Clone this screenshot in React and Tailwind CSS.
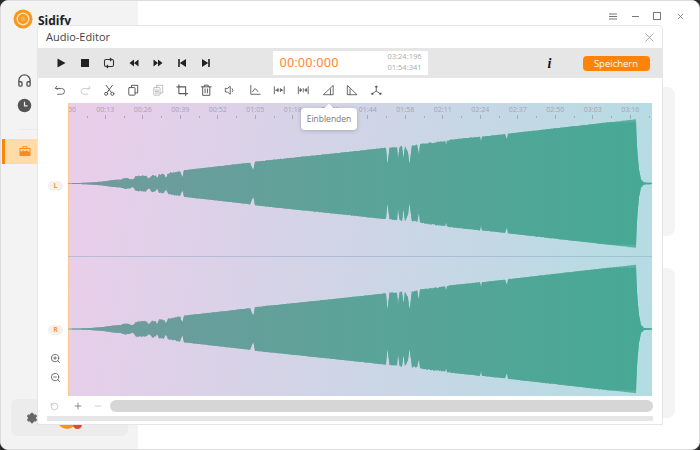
import React from "react";
import { ZoomIn, ZoomOut, RotateCcw, Plus, Minus, X, Headphones, Settings } from "lucide-react";

const TABLE = [[68,.3],[78,.5],[90,1],[103,2],[113,3.5],[120,4],[125,6],[130,5],[133,4],[136,8],[146,8.5],[149,5],[152,9],[156,8],[157,5],[159,10],[164,10],[166,6],[168,11],[180,13],[182.5,7],[184,13.5],[250,21],[252.5,15],[253.5,14],[255,22],[360,33],[386,36],[387.5,20],[389.5,36.5],[397,37],[398,25],[399.5,37],[402,38],[403.5,26],[405,38],[408,32],[409.5,20],[412,39],[414,38],[417,39.5],[419,30],[420,40],[445,43],[446,39],[447,43.5],[480,47],[481,42],[482,47],[505,49.5],[507,44],[508,50],[636,64.5],[636.6,45],[637.5,30],[639,14],[641,4],[644,1],[652,.6]];

function env(x) {
  for (let i = 1; i < TABLE.length; i++) {
    if (x <= TABLE[i][0]) {
      const [a, b] = TABLE[i - 1];
      const [c, d] = TABLE[i];
      return b + ((x - a) / (c - a)) * (d - b);
    }
  }
  return 0.6;
}

function wavePath(cy, seed, clamp) {
  const top = [];
  const bottom = [];
  for (let x = 68; x <= 652; x += 0.5) {
    const e = Math.min(env(x), clamp);
    const amp = x > 120 && x < 183 ? 1.6 : x > 385 && x < 450 ? 1.4 : 0.5;
    const n = Math.sin(x * 12.9898 + seed) * 43758.5453;
    const j = (n - Math.floor(n)) * amp * Math.min(1, e / 10);
    const n2 = Math.sin(x * 78.233 + seed) * 12543.1;
    const j2 = (n2 - Math.floor(n2)) * amp * Math.min(1, e / 10);
    top.push(`${(x - 68).toFixed(1)},${(cy - 103 - (e - j)).toFixed(2)}`);
    bottom.unshift(`${(x - 68).toFixed(1)},${(cy - 103 + (e - j2)).toFixed(2)}`);
  }
  return "M" + top.concat(bottom).join("L") + "Z";
}

const LABELS = ["00:13","00:26","00:39","00:52","01:05","01:18","01:31","01:44","01:58","02:11","02:24","02:37","02:50","03:03","03:16"];

function Ic({ children, color = "#5a5a5a", w = 1 }) {
  return (
    <svg width="12.5" height="12.5" viewBox="0 0 14 14" fill="none" stroke={color} strokeWidth={w} strokeLinecap="round" strokeLinejoin="round">
      {children}
    </svg>
  );
}

const TOOLS = [
  <Ic><path d="M3 2.5 1.5 4.8 4 6M2 5h6.5a3 3 0 0 1 0 6.5H4" /></Ic>,
  <Ic color="#c9c9c9"><path d="M11 2.5l1.5 2.3L10 6M12 5H5.5a3 3 0 0 0 0 6.5H10" /></Ic>,
  <Ic w={1.1}><circle cx="3.5" cy="11" r="1.7" /><circle cx="10.5" cy="11" r="1.7" /><path d="M4.5 9.6 10.5 1.5M9.5 9.6 3.5 1.5" /></Ic>,
  <Ic w={1.1}><rect x="2" y="4" width="7" height="8.5" rx=".6" /><path d="M5 4V1.5h7v8.5h-3" /></Ic>,
  <Ic color="#bdbdbd" w={1.1}><rect x="2" y="4" width="7" height="8.5" rx=".6" /><path d="M5 4V1.5h7v8.5h-3M3.8 6.8h3.4M3.8 8.5h3.4M3.8 10.2h3.4" /></Ic>,
  <Ic w={1.2}><path d="M3.2 1v9.8H13M1 3.2h9.8V13" /></Ic>,
  <Ic w={1.1}><path d="M1.5 3.2h11M4.8 3V1.3h4.4V3M3 3.2v9.5h8V3.2M5.7 5.5v4.5M8.3 5.5v4.5" /></Ic>,
  <Ic><path d="M1.5 5v4h2.3L7 11.5v-9L3.8 5zM9.3 5.2a2.5 2.5 0 0 1 0 3.6" /></Ic>,
  <Ic><path d="M2 1.5v10h10.5" /><path d="M4 8.5l2.7-3.5 1.3 1.5 1 .5 1 1.5" /></Ic>,
  <Ic><path d="M1.5 3v8M12.5 3v8" /><path d="M3 7h2M5.8 5.5v3l-1.6-1.5zM11 7H9M8.2 5.5v3l1.6-1.5z" fill="#5a5a5a" /></Ic>,
  <Ic><path d="M1.5 3v8M12.5 3v8" /><path d="M3 7h.5M3.5 5.5v3l1.6-1.5zM11 7h-.5M10.5 5.5v3l-1.6-1.5z" fill="#5a5a5a" /><path d="M7 5v4" /></Ic>,
  <Ic><path d="M2 12h10.5V2zM9.5 12V5.5" /></Ic>,
  <Ic><path d="M12 12H1.5V2zM4.5 12V5.5" /></Ic>,
  <Ic w={1}><path d="M7 3v5L3 10.5M7 8l4 2.5" /><circle cx="7" cy="3" r=".8" fill="#5a5a5a" /><circle cx="2.5" cy="11" r=".8" fill="#5a5a5a" /><circle cx="11.5" cy="11" r=".8" fill="#5a5a5a" /></Ic>,
];

const tri = (d) => (
  <svg width="12" height="12" viewBox="0 0 12 12" fill="#222"><path d={d} /></svg>
);

const TRANSPORT = [
  tri("M2.5 1.5 10.5 6l-8 4.5z"),
  tri("M2 2h8v8H2z"),
  <svg width="12" height="12" viewBox="0 0 12 12" fill="none" stroke="#333" strokeWidth="1.1"><rect x="1.5" y="2.5" width="9" height="7" rx="1.5" /><path d="M7 1l1.5 1.5L7 4M5 8l-1.5 1.5L5 11" /></svg>,
  tri("M6 2.5v7L1.5 6zM10.5 2.5v7L6 6z"),
  tri("M6 2.5v7L10.5 6zM1.5 2.5v7L6 6z"),
  tri("M2.2 2h1.6v8H2.2zM10 2v8L3.8 6z"),
  tri("M8.2 2h1.6v8H8.2zM2 2v8L8.2 6z"),
];

function Cell({ children }) {
  return <div className="w-[24.3px] h-full flex items-center justify-center shrink-0">{children}</div>;
}

export default function App() {
  const font = { fontFamily: '"Open Sans", "Liberation Sans", sans-serif' };
  return (
    <div style={font} className="w-[700px] h-[450px] bg-[#2a2a2a] overflow-hidden relative">
      <div className="w-[699.5px] h-[449.5px] flex bg-white rounded-lg border border-[#dcdcdc] overflow-hidden">
        <aside className="w-[137px] h-full bg-[#f3f3f3] flex flex-col shrink-0">
          <div className="h-[44px] flex items-start pl-[12px] pt-[8px] gap-[5px]">
            <svg width="20" height="20" viewBox="0 0 20 20">
              <circle cx="10" cy="10" r="9.5" fill="#f9971f" />
              <circle cx="10" cy="10" r="5.8" fill="none" stroke="#fde3b8" strokeWidth="1.4" />
              <circle cx="10" cy="10" r="2.4" fill="#fbb04e" />
            </svg>
            <span className="text-[12px] font-bold text-[#222] leading-[18px] mt-[3px]">Sidify</span>
          </div>
          <div className="flex flex-col items-start pl-[16px] mt-[28px] gap-[9px]">
            <Headphones size={15} color="#555" strokeWidth={2.2} />
            <svg width="15" height="15" viewBox="0 0 15 15" className="translate-y-px">
              <circle cx="7.5" cy="7.5" r="6.8" fill="#555" />
              <path d="M7.5 3.8v4h3" stroke="#eee" strokeWidth="1.2" fill="none" />
            </svg>
          </div>
          <div className="mt-[17px] ml-[17px] w-[22px] h-px bg-[#ebebeb]" />
          <div className="mt-[9px] h-[25px] bg-[#ffdca8] border-l-[3px] border-[#ff8307] ml-px flex items-center pl-[14px]">
            <svg width="12" height="12" viewBox="0 0 12 12" fill="#ff8a1c" className="-translate-y-px"><path d="M3.5 3V1.2h5V3H11.5v8H.5V3zM4.5 3h3v-.9h-3zM1.5 6.5h1.5l1-1.5 2 1.5 2-1.5 1 1.5h1.5V4h-9z" fillRule="evenodd" /></svg>
          </div>
          <div className="mt-auto mb-[13px] ml-[10px] w-[117px] h-[37px] rounded-md bg-[#ececec] flex items-center pl-[15px] gap-[19px] relative">
            <Settings size={12} color="#666" fill="#666" className="translate-y-px" />
            <div className="w-[20px] h-[20px] rounded-full bg-[#f8931f] relative top-[2px]" />
            <div className="w-[9px] h-[9px] rounded-full bg-[#e0492f] -ml-[23px] relative top-[7px]" />
          </div>
        </aside>
        <main className="flex-1 flex flex-col">
          <div className="h-[30px] flex items-center justify-end shrink-0">
            <div className="flex items-center gap-[14.5px] mr-[14px] text-[#777]">
              <svg width="8" height="7" viewBox="0 0 8 7" stroke="#777" strokeWidth="1"><path d="M0 1h8M0 3.5h8M0 6h8" /></svg>
              <span className="w-[7px] h-px bg-[#777]" />
              <span className="w-[8px] h-[8px] border border-[#777]" />
              <X size={9} color="#777" />
            </div>
          </div>
          <div className="mt-[56px] mr-[24px] ml-[24px] h-[149px] rounded-lg bg-[#f4f4f4] shrink-0" />
          <div className="mt-[32px] mr-[24px] ml-[24px] h-[150px] rounded-lg bg-[#f4f4f4] shrink-0" />
        </main>
      </div>

      <div className="absolute left-[38px] top-[26px] w-[624px] h-[398px] bg-white flex flex-col shadow-[0_0_0_1px_#e6e6e6] rounded-t-sm">
        <div className="h-[22px] flex items-center justify-between pl-[8px] pr-[5px] shrink-0">
          <span className="text-[11px] text-[#444]">Audio-Editor</span>
          <X size={15} color="#777" strokeWidth={1} />
        </div>
        <div className="h-[30px] bg-[#e6e6e6] flex items-center pl-[10.5px] shrink-0">
          <div className="flex h-full w-[224px]">
            {TRANSPORT.map((t, i) => <Cell key={i}>{t}</Cell>)}
          </div>
          <div className="w-[155px] h-[24px] bg-white flex items-center justify-between pl-[7px] pr-[6px]">
            <span style={{ fontFamily: 'Roboto, sans-serif' }} className="text-[13px] tracking-[0.2px] text-[#ff8a3d]">00:00:000</span>
            <div className="flex flex-col items-end text-[7.5px] leading-[11px] text-[#aaa] -translate-y-px">
              <span>03:24:196</span>
              <span>01:54:341</span>
            </div>
          </div>
          <span style={{ fontFamily: '"Liberation Serif", serif' }} className="ml-[120px] text-[14px] font-bold italic text-[#111] w-[8px]">i</span>
          <button className="ml-[27px] w-[67px] h-[15px] rounded-sm bg-[#ff8307] text-white text-[9.5px] leading-[15px]">Speichern</button>
        </div>
        <div className="h-[25px] flex items-center pl-[10.5px] shrink-0">
          {TOOLS.map((t, i) => <Cell key={i}>{t}</Cell>)}
        </div>
        <div className="h-[293px] flex shrink-0">
          <div className="w-[30px] flex flex-col items-center shrink-0">
            <div className="mt-[78px] ml-[5px] w-[15px] h-[10px] rounded-full bg-[#f6f0ea] text-[7px] leading-[10px] font-bold text-center text-[#f59a45]">L</div>
            <div className="mt-[134px] ml-[5px] w-[15px] h-[10px] rounded-full bg-[#f6f0ea] text-[7px] leading-[10px] font-bold text-center text-[#f59a45]">R</div>
            <div className="mt-[17.5px] ml-[5px] flex flex-col gap-[8px]">
              <ZoomIn size={11} color="#666" />
              <ZoomOut size={11} color="#666" />
            </div>
          </div>
          <div className="w-[584px] h-full relative border-l border-[#fbc98a] bg-[linear-gradient(100deg,#ebcdea,#b2dde2)]">
            <svg className="absolute left-[-1px] top-0" width="584" height="293" viewBox="0 0 584 293">
              <defs>
                <linearGradient id="w" x1="0" x2="1" y1="0" y2="0">
                  <stop offset="0" stopColor="#739a9e" />
                  <stop offset="0.5" stopColor="#5ba398" />
                  <stop offset="1" stopColor="#46a995" />
                </linearGradient>
              </defs>
              <path d={wavePath(183.5, 1, 99)} fill="url(#w)" opacity="0.85" />
              <path d={wavePath(183.5, 1, 61.5)} fill="url(#w)" />
              <path d={wavePath(329, 5, 99)} fill="url(#w)" opacity="0.85" />
              <path d={wavePath(329, 5, 61.5)} fill="url(#w)" />
              <path d="M0 153.5H584" stroke="#8ea6c8" strokeOpacity="0.5" />
            </svg>
            <div className="absolute left-0 top-0 w-full h-[16px] flex overflow-hidden text-[7px] leading-[9px] text-[#a5a2b4]">
              <div className="w-[17.5px] shrink-0 relative">
                <span className="block mt-[2px] -ml-[1px] w-[8px] overflow-hidden">00:</span>
                <span className="absolute left-[18px] top-[13px] w-px h-[2px] bg-[#aaaaba]" />
              </div>
              {LABELS.map((l) => (
                <div key={l} className="w-[37.5px] shrink-0 flex flex-col items-center relative">
                  <span className="mt-[2px]">{l}</span>
                  <span className="mt-[1px] w-px h-[4px] bg-[#aaaaba]" />
                  <span className="absolute left-[37px] top-[13px] w-px h-[2px] bg-[#aaaaba]" />
                </div>
              ))}
            </div>
            <div className="absolute left-[232px] top-[5px] w-[56px] h-[22px] bg-white rounded-sm shadow-[0_1px_4px_rgba(0,0,0,0.2)] flex items-center justify-center text-[8.5px] text-[#777]">
              <span>Einblenden</span>
              <span className="absolute left-[25px] -top-[3px] w-[6px] h-[6px] bg-white rotate-45" />
            </div>
          </div>
        </div>
        <div className="flex-1 flex flex-col pl-[9px] pr-[9px]">
          <div className="h-[12px] mt-[4px] flex items-center">
            <RotateCcw size={9} color="#bbb" className="ml-[3px]" />
            <Plus size={10} color="#777" className="ml-[14px]" />
            <Minus size={10} color="#c4c4c4" className="ml-[10px]" />
            <div className="ml-[7px] flex-1 h-[12px] rounded-full bg-[#d6d6d6]" />
          </div>
          <div className="h-[5px] mt-[4px] bg-[#e6e6e6]" />
        </div>
      </div>
    </div>
  );
}
